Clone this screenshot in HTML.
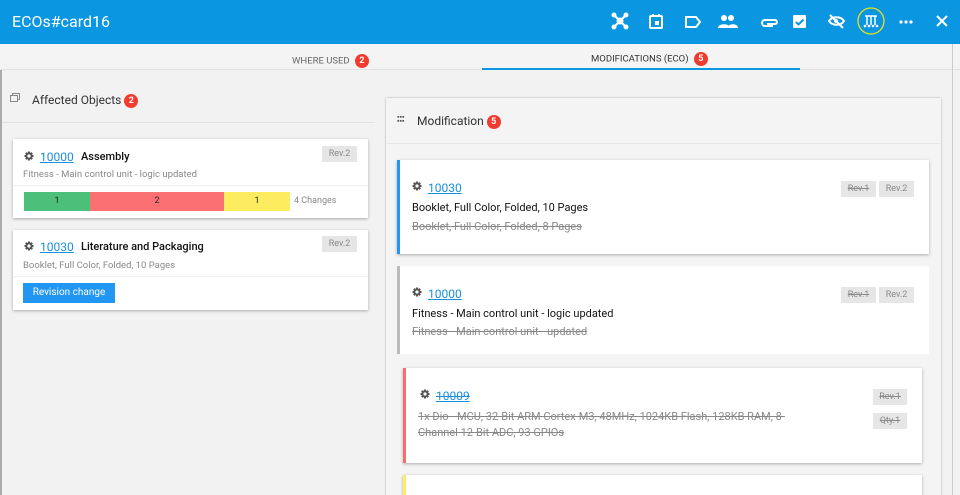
<!DOCTYPE html>
<html><head><meta charset="utf-8"><style>
*{box-sizing:border-box;margin:0;padding:0}
html,body{width:960px;height:495px;overflow:hidden}
body{font-family:Roboto,"Liberation Sans",sans-serif;background:#f2f2f2;position:relative;color:#222}
.abs{position:absolute}
.hdr{left:0;top:0;width:960px;height:44px;background:#0a96e0}
.badge{display:inline-block;width:14px;height:14px;border-radius:7px;background:#f23b2f;color:#fff;font-size:9px;font-weight:bold;text-align:center;line-height:14px}
.card{background:#fff;box-shadow:0 1px 3px rgba(0,0,0,.3)}
.link{color:#1a8fe0;text-decoration:underline;font-size:12px}
.rev{background:#e6e6e6;color:#888;font-size:9px;text-align:center;line-height:16px;height:16px}
.strike{text-decoration:line-through;color:#888}
</style></head><body>
<svg width="0" height="0" style="position:absolute"><defs><g id="g"><circle cx="5" cy="5" r="2.6" fill="none" stroke="#555" stroke-width="2"/><path d="M5 0.5v2M5 7.5v2M0.5 5h2M7.5 5h2M1.8 1.8l1.4 1.4M6.8 6.8l1.4 1.4M8.2 1.8l-1.4 1.4M3.2 6.8l-1.4 1.4" stroke="#555" stroke-width="2"/></g></defs></svg>
<div class="abs hdr"></div>
<div class="abs" style="left:12px;top:12px;color:#fff;font-size:16px">ECOs#card16</div>
<svg class="abs" style="left:600px;top:0" width="360" height="44" fill="#fff" stroke="#fff">
<g stroke-width="2" fill="none"><path d="M14 15l12 12M26 15l-12 12"/></g>
<circle cx="20" cy="21" r="3"/><circle cx="14" cy="15" r="2"/><circle cx="26" cy="15" r="2"/><circle cx="14" cy="27" r="2"/><circle cx="26" cy="27" r="2"/>
<rect x="50" y="16" width="12" height="12" rx="1" fill="none" stroke-width="2"/><rect x="55" y="21" width="4" height="4" stroke="none"/><path d="M53 14v3M59 14v3" stroke-width="2"/>
<path d="M86 17h10l4 5-4 5h-10z" fill="none" stroke-width="2"/>
<g stroke="none"><circle cx="124" cy="18" r="3"/><circle cx="131" cy="18" r="3"/><path d="M118 28c0-5 12-5 12 0z M127 28c1-5 11-5 11 0z"/></g>
<path d="M173 26h-8a3 3 0 0 1 0-6h10a2 2 0 0 1 0 4h-8" fill="none" stroke-width="2"/>
<rect x="193" y="15" width="13" height="13" rx="1" stroke="none"/><path d="M196 22l2.5 2.5 5-5" stroke="#0a96e0" stroke-width="2" fill="none"/>
<path d="M229 21c3-5 12-5 15 0-3 5-12 5-15 0z" fill="none" stroke-width="2"/><circle cx="236" cy="21" r="2" stroke="none"/><path d="M230 15l13 13" stroke-width="2"/>
<circle cx="271" cy="21" r="13" fill="none" stroke="#e8e020" stroke-width="1.3"/>
<path d="M265 16h12M267 16v9M271 16v9M275 16v9" stroke-width="1.5"/><g stroke="none"><circle cx="265" cy="26" r="1.3"/><circle cx="269" cy="26" r="1.3"/><circle cx="273" cy="26" r="1.3"/><circle cx="277" cy="26" r="1.3"/></g>
<g stroke="none"><circle cx="301" cy="22" r="1.6"/><circle cx="306" cy="22" r="1.6"/><circle cx="311" cy="22" r="1.6"/></g>
<path d="M337 16l10 10M347 16l-10 10" stroke-width="2"/>
</svg>
<div class="abs" style="left:0;top:44px;width:960px;height:26px;background:#f4f4f4;border-bottom:1px solid #e2e2e2"></div>
<div class="abs" style="left:292px;top:54px;font-size:9.5px;color:#666">WHERE USED <span class="badge" style="margin-left:3px;vertical-align:middle">2</span></div>
<div class="abs" style="left:591px;top:52px;font-size:9.5px;color:#333">MODIFICATIONS (ECO) <span class="badge" style="margin-left:3px;vertical-align:middle">5</span></div>
<div class="abs" style="left:482px;top:68px;width:318px;height:2px;background:#0a96e0"></div>
<div class="abs" style="left:952px;top:44px;width:1px;height:451px;background:#ccc"></div>
<div class="abs" style="left:0;top:70px;width:2px;height:425px;background:#aaa"></div>
<!-- left -->
<div class="abs" style="left:12px;top:93px;width:8px;height:7px;border:1px solid #888"></div>
<div class="abs" style="left:10px;top:95px;width:8px;height:7px;border:1px solid #888;background:#f2f2f2"></div>
<div class="abs" style="left:32px;top:93px;font-size:12px;color:#333">Affected Objects <span class="badge" style="vertical-align:middle">2</span></div>
<div class="abs" style="left:2px;top:122px;width:373px;height:1px;background:#e2e2e2"></div>
<div class="abs card" style="left:13px;top:139px;width:355px;height:79px"></div>
<svg class="abs" style="left:24px;top:151px" width="10" height="10"><use href="#g"/></svg>
<div class="abs link" style="left:40px;top:150px">10000</div>
<div class="abs" style="left:81px;top:150px;font-size:11px;color:#111;font-weight:500">Assembly</div>
<div class="abs rev" style="left:322px;top:146px;width:35px">Rev.2</div>
<div class="abs" style="left:23px;top:169px;font-size:9.5px;color:#888">Fitness - Main control unit - logic updated</div>
<div class="abs" style="left:13px;top:185px;width:355px;height:1px;background:#eee"></div>
<div class="abs" style="left:24px;top:192px;width:66px;height:19px;background:#4cc07a;font-size:9px;text-align:center;line-height:19px">1</div>
<div class="abs" style="left:90px;top:192px;width:134px;height:19px;background:#fb7070;font-size:9px;text-align:center;line-height:19px">2</div>
<div class="abs" style="left:224px;top:192px;width:66px;height:19px;background:#fdec5f;font-size:9px;text-align:center;line-height:19px">1</div>
<div class="abs" style="left:294px;top:196px;font-size:9px;color:#888">4 Changes</div>
<div class="abs card" style="left:13px;top:230px;width:355px;height:80px"></div>
<svg class="abs" style="left:24px;top:241px" width="10" height="10"><use href="#g"/></svg>
<div class="abs link" style="left:40px;top:240px">10030</div>
<div class="abs" style="left:81px;top:240px;font-size:11px;color:#111;font-weight:500">Literature and Packaging</div>
<div class="abs rev" style="left:322px;top:236px;width:35px">Rev.2</div>
<div class="abs" style="left:23px;top:260px;font-size:9.5px;color:#888">Booklet, Full Color, Folded, 10 Pages</div>
<div class="abs" style="left:13px;top:276px;width:355px;height:1px;background:#eee"></div>
<div class="abs" style="left:23px;top:283px;width:92px;height:20px;background:#2196f3;color:#fff;font-size:10px;text-align:center;line-height:20px">Revision change</div>
<!-- right -->
<div class="abs" style="left:386px;top:98px;width:555px;height:410px;background:#f4f4f4;box-shadow:0 0 2px rgba(0,0,0,.3)"></div>
<div class="abs" style="left:397px;top:115px;font-size:7px;color:#555;line-height:4px">▪▪▪<br>▪▪▪</div>
<div class="abs" style="left:417px;top:114px;font-size:12px;color:#333">Modification <span class="badge" style="vertical-align:middle">5</span></div>
<div class="abs" style="left:387px;top:143px;width:553px;height:1px;background:#e6e6e6"></div>
<div class="abs card" style="left:397px;top:160px;width:532px;height:94px;border-left:3px solid #2196f3"></div>
<svg class="abs" style="left:412px;top:181px" width="10" height="10"><use href="#g"/></svg>
<div class="abs link" style="left:428px;top:181px">10030</div>
<div class="abs" style="left:412px;top:201px;font-size:11px;color:#111">Booklet, Full Color, Folded, 10 Pages</div>
<div class="abs strike" style="left:412px;top:220px;font-size:11px">Booklet, Full Color, Folded, 8 Pages</div>
<div class="abs rev strike" style="left:841px;top:181px;width:35px">Rev.1</div>
<div class="abs rev" style="left:879px;top:181px;width:35px">Rev.2</div>
<div class="abs card" style="left:397px;top:266px;width:532px;height:88px;border-left:3px solid #bbb;box-shadow:none"></div>
<svg class="abs" style="left:412px;top:287px" width="10" height="10"><use href="#g"/></svg>
<div class="abs link" style="left:428px;top:287px">10000</div>
<div class="abs" style="left:412px;top:307px;font-size:11px;color:#111">Fitness - Main control unit - logic updated</div>
<div class="abs strike" style="left:412px;top:325px;font-size:11px">Fitness - Main control unit - updated</div>
<div class="abs rev strike" style="left:841px;top:287px;width:35px">Rev.1</div>
<div class="abs rev" style="left:879px;top:287px;width:35px">Rev.2</div>
<div class="abs card" style="left:403px;top:368px;width:519px;height:95px;border-left:3px solid #f86c6c"></div>
<svg class="abs" style="left:420px;top:389px" width="10" height="10"><use href="#g"/></svg>
<div class="abs link" style="left:436px;top:389px;text-decoration:underline line-through">10009</div>
<div class="abs strike" style="left:418px;top:409px;font-size:11px;line-height:16px;width:380px">1x Dio - MCU, 32-Bit ARM Cortex-M3, 48MHz, 1024KB Flash, 128KB RAM, 8-Channel 12-Bit ADC, 93 GPIOs</div>
<div class="abs rev strike" style="left:873px;top:389px;width:34px">Rev.1</div>
<div class="abs rev strike" style="left:873px;top:413px;width:34px">Qty.1</div>
<div class="abs card" style="left:403px;top:475px;width:519px;height:30px;border-left:3px solid #fdec5f"></div>
</body></html>
